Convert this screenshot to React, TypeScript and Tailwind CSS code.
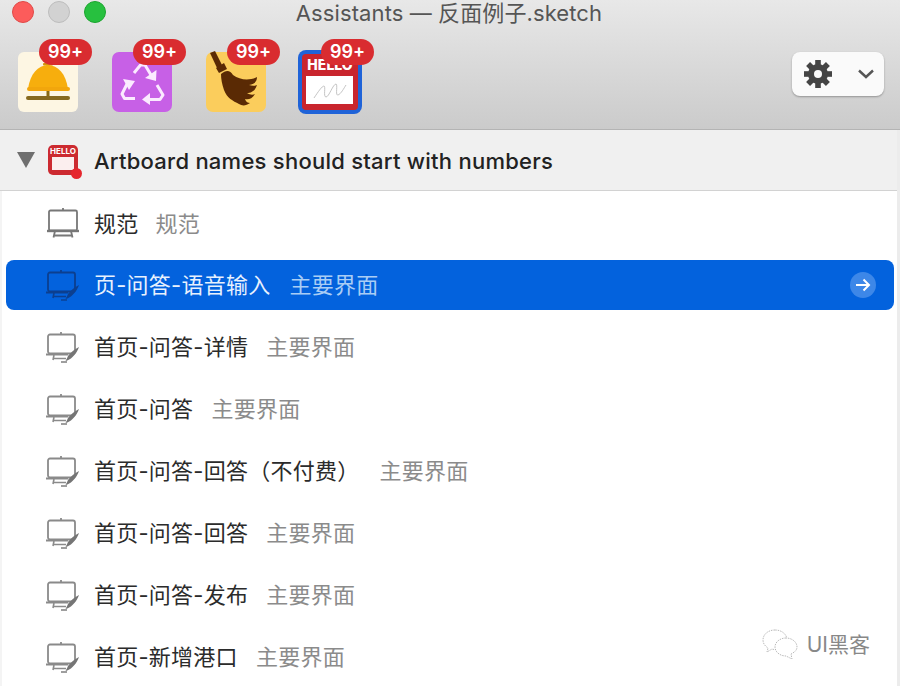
import React from "react";

const FONT = "font-['Inter','Noto_Sans_CJK_SC',sans-serif]";

function Badge({ className = "" }: { className?: string }) {
  return (
    <div className={`absolute top-[-13px] h-[26px] w-[53px] rounded-[13px] bg-[#d92c30] text-white text-[18px] font-semibold leading-[26px] text-center ${className}`}>
      99+
    </div>
  );
}

function Bell() {
  return (
    <svg viewBox="0 0 60 60" className="w-[60px] h-[60px]">
      <rect width="60" height="60" rx="6" fill="#fdf6e3" />
      <rect x="28.5" y="9" width="3" height="6" fill="#b8860b" />
      <rect x="25" y="11" width="10" height="2.5" rx="1" fill="#d2940c" />
      <path d="M10 37 C12 22 20 13 30 13 C40 13 48 22 50 37 Z" fill="#f7ae0d" />
      <rect x="9" y="35" width="43" height="4" rx="2" fill="#f2a60c" />
      <rect x="28.5" y="39" width="3" height="6" fill="#8a6a14" />
      <rect x="8" y="44" width="44" height="4" rx="2" fill="#86691f" />
    </svg>
  );
}

function Recycle() {
  return (
    <svg viewBox="0 0 60 60" className="w-[60px] h-[60px]">
      <rect width="60" height="60" rx="7" fill="#c760e6" />
      <g fill="none" stroke="#fbeaff" strokeWidth="3" strokeLinejoin="round">
        <path d="M22 21 L28.5 13 L33 13 L39 23" />
        <path d="M15 32 L10 42 L12.5 46.5 L23 46.5" />
        <path d="M45 33 L51 43 L48 47.5 L37 47.5" />
      </g>
      <g fill="#fbeaff">
        <path d="M33 26 L44 29 L44.5 18 Z" />
        <path d="M11 27 L23 29 L17 38 Z" />
        <path d="M38 41 L38 53 L30 47.5 Z" />
      </g>
    </svg>
  );
}

function Broom() {
  return (
    <svg viewBox="0 0 60 60" className="w-[60px] h-[60px] overflow-visible">
      <rect width="60" height="60" rx="7" fill="#fbcd5c" />
      <path d="M4 1 L9 -1 L17 15 L12 18 Z" fill="#5a2a04" />
      <path d="M10 16 L18 11 L21 17 L13 21 Z" fill="#5a2a04" />
      <path d="M15 22 C20 18 24 18 27 23 C34 28 43 29 51 25 C51 30 48 32 43 33 C46 34 49 34 51 33 C49 39 45 41 41 41 C44 43 47 43 49 42 C46 47 42 48 39 47 C40 50 42 51 44 51 C40 54 36 54 33 52 C27 49 21 46 18 38 C16 32 15 27 15 22 Z" fill="#5a2a04" />
    </svg>
  );
}

function Hello() {
  return (
    <div className="w-[64px] h-[64px] rounded-[8px] bg-[#1f63d8] p-[4px]">
      <svg viewBox="0 0 56 56" className="w-[56px] h-[56px]">
        <rect width="56" height="56" rx="4" fill="#c9252d" />
        <text x="28" y="16" textAnchor="middle" fontSize="14" fontWeight="800" fill="#fff" fontFamily="Inter, sans-serif">HELLO</text>
        <rect x="4" y="22" width="47" height="28" fill="#fff" />
        <path d="M12 44 C16 38 20 32 22 32 C24 32 21 43 24 43 C27 43 31 30 34 30 C36 30 33 42 36 41 C39 40 42 34 44 31" fill="none" stroke="#b5b5b5" strokeWidth="0.8" />
      </svg>
    </div>
  );
}

function Gear() {
  const teeth = [0, 45, 90, 135, 180, 225, 270, 315];
  return (
    <svg viewBox="0 0 30 30" className="w-[30px] h-[30px]">
      {teeth.map((a) => (
        <rect key={a} x="12.2" y="1" width="5.6" height="8" fill="#444" transform={`rotate(${a} 15 15)`} />
      ))}
      <circle cx="15" cy="15" r="10" fill="#444" />
      <circle cx="15" cy="15" r="4" fill="#fafafa" />
    </svg>
  );
}

function Board() {
  return (
    <svg viewBox="0 0 36 32" className="w-[36px] h-[32px]" fill="none" stroke="#777" strokeWidth="1.8">
      <path d="M17 0 V3" />
      <rect x="3" y="2.5" width="28" height="20" rx="1.5" />
      <path d="M1 23 H33" strokeWidth="2.4" />
      <path d="M9 23 L7.5 29.5 M25 23 L26.5 29.5 M8 27.5 H26" />
    </svg>
  );
}

function PenBoard({ color = "#8a8a8a", pen = "#757575" }: { color?: string; pen?: string }) {
  return (
    <svg viewBox="0 0 36 32" className="w-[36px] h-[32px]" fill="none" stroke={color} strokeWidth="1.8">
      <path d="M15 1 V3.5" />
      <rect x="2" y="3.5" width="27" height="19" rx="2" />
      <path d="M0 23.5 H22" strokeWidth="2" />
      <path d="M8 24 L7 29 M7.5 27.5 H20" strokeWidth="1.6" />
      <path d="M33 16 C29 18 25 21 22 25 C21 27 20.5 28.5 19.5 30 C22 29.5 24.5 28 26.5 26 C29.5 23 32 19.5 33 16 Z" fill={pen} stroke="none" />
      <path d="M15 31 H21" strokeWidth="1.4" stroke={pen} />
    </svg>
  );
}

function Row({ name, sub, gap = "ml-[18px]" }: { name: string; sub: string; gap?: string }) {
  return (
    <div className="h-[62px] flex items-center pl-[46px]">
      <div className="w-[48px] flex-none"><PenBoard /></div>
      <span className="text-[22px] tracking-[0.25px] text-[#2b2b2b]">{name}</span>
      <span className={`text-[22px] tracking-[0.25px] text-[#8b8b8b] ${gap}`}>{sub}</span>
    </div>
  );
}

const rows = [
  ["首页-问答-详情", "主要界面"],
  ["首页-问答", "主要界面"],
  ["首页-问答-回答（不付费）", "主要界面"],
  ["首页-问答-回答", "主要界面"],
  ["首页-问答-发布", "主要界面"],
  ["首页-新增港口", "主要界面"],
];

export default function App() {
  return (
    <div className={`w-[900px] h-[686px] overflow-hidden bg-white relative ${FONT}`}>
      <div className="h-[130px] bg-gradient-to-b from-[#e8e8e8] to-[#cbcbcb] border-b border-[#b4b4b4] relative">
        <div className="h-[26px] flex items-center justify-center text-[22px] tracking-[0.1px] leading-[26px] text-[#555] relative pr-[2px]">
          Assistants — 反面例子.sketch
          <div className="absolute left-[12px] top-[1px] flex gap-[14px]">
            <div className="w-[22px] h-[22px] rounded-full bg-[#fc5c5b] border border-[#e04a48]" />
            <div className="w-[22px] h-[22px] rounded-full bg-[#d2d2d2] border border-[#bdbdbd]" />
            <div className="w-[22px] h-[22px] rounded-full bg-[#27c03f] border border-[#1ca52f]" />
          </div>
        </div>
        <div className="flex items-center pt-[24px] pl-[18px]">
          <div className="relative"><Bell /><Badge className="left-[21px]" /></div>
          <div className="relative ml-[34px]"><Recycle /><Badge className="left-[21px]" /></div>
          <div className="relative ml-[34px]"><Broom /><Badge className="left-[21px]" /></div>
          <div className="relative ml-[32px]"><Hello /><Badge className="left-[23px] !top-[-11px]" /></div>
          <div className="ml-auto mr-[16px] mt-[-16px] w-[92px] h-[44px] rounded-[8px] bg-[#fafafa] shadow-[0_1px_2px_rgba(0,0,0,0.3)] flex items-center pl-[11px]">
            <Gear />
            <svg viewBox="0 0 16 10" className="w-[16px] h-[10px] ml-[25px]" fill="none" stroke="#555" strokeWidth="2.4"><path d="M1 1.5 L8 8 L15 1.5" /></svg>
          </div>
        </div>
      </div>

      <div className="h-[61px] bg-[#f0f0f0] border-b border-[#d2d2d2] flex items-center pl-[17px]">
        <svg viewBox="0 0 18 16" className="w-[18px] h-[16px]"><path d="M0 0 H18 L9 16 Z" fill="#6f6f6f" /></svg>
        <div className="relative ml-[13px] w-[30px] h-[30px] rounded-[5px] bg-[#cc2a30]">
          <div className="text-[8px] font-bold text-white text-center leading-[12px]">HELLO</div>
          <div className="mx-[4px] h-[13px] bg-[#fbeeee]" />
          <div className="absolute right-[-4px] bottom-[-4px] w-[11px] h-[11px] rounded-full bg-[#e5262d]" />
        </div>
        <span className="ml-[16px] pt-[2px] text-[22px] font-medium text-[#222] tracking-[0.25px]">Artboard names should start with numbers</span>
      </div>

      <div className="h-[62px] flex items-center pl-[46px] pt-[4px]">
        <div className="w-[48px] flex-none"><Board /></div>
        <span className="text-[22px] tracking-[0.25px] text-[#2b2b2b]">规范</span>
        <span className="text-[22px] tracking-[0.25px] text-[#8b8b8b] ml-[17px]">规范</span>
      </div>

      <div className="mx-[6px] mt-[7px] mb-[6px] h-[50px] rounded-[8px] bg-[#0362dd] flex items-center pl-[40px] pr-[18px]">
        <div className="w-[48px] flex-none"><PenBoard color="#0c3f8f" pen="#0c3f8f" /></div>
        <span className="text-[22px] tracking-[0.25px] text-[#e8f1fd]">页-问答-语音输入</span>
        <span className="text-[22px] tracking-[0.25px] text-[#a9cdf5] ml-[19px]">主要界面</span>
        <div className="ml-auto w-[26px] h-[26px] rounded-full bg-[#3d87e8] flex items-center justify-center">
          <svg viewBox="0 0 16 14" className="w-[16px] h-[14px]" fill="none" stroke="#fff" strokeWidth="2"><path d="M1 7 H14 M8.5 1.5 L14 7 L8.5 12.5" /></svg>
        </div>
      </div>

      <Row name={rows[0][0]} sub={rows[0][1]} />
      <Row name={rows[1][0]} sub={rows[1][1]} />
      <Row name={rows[2][0]} sub={rows[2][1]} gap="ml-[20px]" />
      <Row name={rows[3][0]} sub={rows[3][1]} />
      <Row name={rows[4][0]} sub={rows[4][1]} />
      <Row name={rows[5][0]} sub={rows[5][1]} />

      <div className="absolute right-[30px] bottom-[26px] flex items-center text-[#888]">
        <svg viewBox="0 0 36 30" className="w-[36px] h-[30px]" fill="#fff" stroke="#a8a8a8" strokeWidth="0.8" strokeDasharray="1.5 1">
          <path d="M13 1 C6 1 1 5.5 1 11 C1 14.5 3 17 6 19 L5 23 L10 20 C11 20.5 12 20.5 13 20.5 C20 20.5 25 16 25 11 C25 5.5 20 1 13 1 Z" />
          <path d="M24 9 C18 9 13 13 13 18 C13 23 18 27 24 27 L30 30 L29 25 C33 23 35 21 35 18 C35 13 30 9 24 9 Z" />
        </svg>
        <span className="ml-[9px] text-[21px]">UI黑客</span>
      </div>

      <div className="absolute right-0 top-[130px] bottom-0 w-[3px] bg-[#ececec]" />
      <div className="absolute left-0 top-[191px] bottom-0 w-[2px] bg-[#f4f4f4]" />
    </div>
  );
}
